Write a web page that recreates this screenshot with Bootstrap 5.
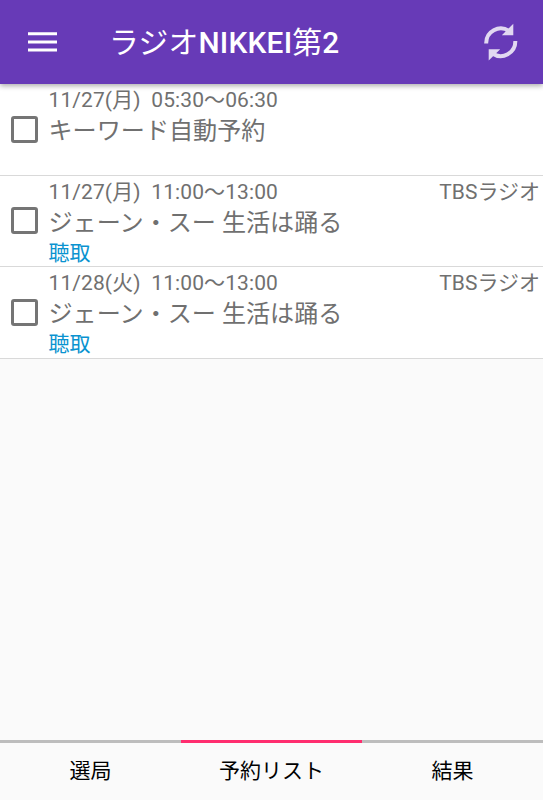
<!DOCTYPE html>
<html lang="ja">
<head>
<meta charset="utf-8">
<meta name="viewport" content="width=device-width, initial-scale=1">
<title>ラジオNIKKEI第2</title>
<link href="https://cdn.jsdelivr.net/npm/bootstrap@5.3.0/dist/css/bootstrap.min.css" rel="stylesheet">
<style>
body { font-family: Roboto, "Noto Sans CJK JP", sans-serif; background: #fafafa; color: #707070; }
.app-bar { height: 84px; padding: 0 24px 0 28px; background: #673ab7; box-shadow: 0 2px 5px rgba(0,0,0,.32); z-index: 2; }
.app-title { font-size: 29.8px; line-height: 40px; font-weight: 500; letter-spacing: .22px; margin-left: 51px; padding-top: 2px; }
.icon-btn svg { display: block; }
.reserve { height: 91.5px; padding: 1px 3px 0 10.5px; border-bottom: 1.5px solid #d9d9d9; }
.reserve .form-check-input { width: 27px; height: 27px; margin: 30.5px 11px 0 0; border: 3px solid #757575; border-radius: 3px; }
.when, .station, .state { font-size: 21px; line-height: 30px; }
.when { letter-spacing: .1px; }
.show-name { font-size: 24.1px; line-height: 32px; margin-bottom: -1px; }
.state { color: #0a93d0; }
.tab-bar { height: 60px; }
.tab-bar .nav-link { border-top: 3px solid #bdbdbd; color: #000; font-size: 21px; line-height: 30px; padding: 13px 0 0; }
.tab-bar .nav-link.active { border-color: #ff2d6f; }
</style>
</head>
<body class="d-flex flex-column vh-100 overflow-hidden">
<header class="app-bar d-flex align-items-center text-white position-relative flex-shrink-0">
  <button class="btn p-0 border-0 icon-btn" aria-label="メニュー">
    <svg width="30" height="22" viewBox="0 0 30 22" fill="#fff"><path d="M0 1.2h29v3H0zM0 9.4h29v3H0zM0 17.6h29v3H0z"/></svg>
  </button>
  <h1 class="app-title mb-0"><span class="fw-normal">ラジオ</span>NIKKEI<span class="fw-normal">第</span>2</h1>
  <button class="btn p-0 border-0 icon-btn ms-auto" aria-label="更新">
    <svg width="36" height="38" viewBox="0 0 36 38"><g fill="none" stroke="#e1d8f1" stroke-width="4"><path d="M3.2 20.5A14.6 14.6 0 0 1 26 8"/><path d="M32.3 18A14.6 14.6 0 0 1 9.500 30.500"/></g><path fill="#e1d8f1" d="M30.300 .7V12.200H18.800zM5.700 37.500V26.300H17.200z"/></svg>
  </button>
</header>
<main class="flex-grow-1">
  <div class="reserve d-flex bg-white">
    <input class="form-check-input flex-shrink-0" type="checkbox" aria-label="予約1">
    <div class="flex-grow-1">
      <div class="when">11/27(月)&nbsp; 05:30〜06:30</div>
      <div class="show-name">キーワード自動予約</div>
    </div>
  </div>
  <div class="reserve d-flex bg-white">
    <input class="form-check-input flex-shrink-0" type="checkbox" aria-label="予約2">
    <div class="flex-grow-1">
      <div class="d-flex justify-content-between"><span class="when">11/27(月)&nbsp; 11:00〜13:00</span><span class="station">TBSラジオ</span></div>
      <div class="show-name">ジェーン・スー 生活は踊る</div>
      <div class="state">聴取</div>
    </div>
  </div>
  <div class="reserve d-flex bg-white">
    <input class="form-check-input flex-shrink-0" type="checkbox" aria-label="予約3">
    <div class="flex-grow-1">
      <div class="d-flex justify-content-between"><span class="when">11/28(火)&nbsp; 11:00〜13:00</span><span class="station">TBSラジオ</span></div>
      <div class="show-name">ジェーン・スー 生活は踊る</div>
      <div class="state">聴取</div>
    </div>
  </div>
</main>
<nav class="tab-bar nav nav-fill row g-0 flex-shrink-0">
  <a class="nav-link col-4 text-center" href="#">選局</a>
  <a class="nav-link col-4 text-center active" href="#">予約リスト</a>
  <a class="nav-link col-4 text-center" href="#">結果</a>
</nav>
<script src="https://cdn.jsdelivr.net/npm/bootstrap@5.3.0/dist/js/bootstrap.bundle.min.js"></script>
</body>
</html>
